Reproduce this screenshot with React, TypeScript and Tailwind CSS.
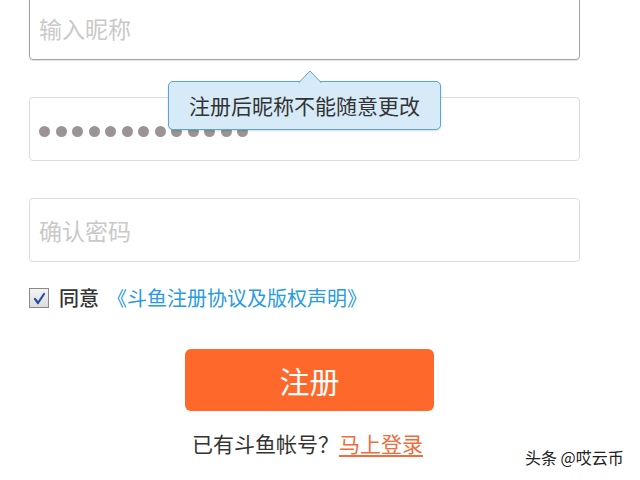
import React from "react";

const font = { fontFamily: '"Noto Sans CJK SC", "Noto Sans", sans-serif' };

export default function App() {
  const dots = Array.from({ length: 13 });
  return (
    <div className="relative w-[640px] h-[480px] bg-white overflow-hidden" style={font}>
      <div className="pl-[29px] w-[580px] flex flex-col">
        <div className="mt-[-4px] h-[64px] border border-[#a3a3a3] rounded-[4px] flex items-center pl-[9px] shadow-[0_1px_1px_rgba(0,0,0,0.12)]">
          <span className="text-[23px] text-[#c9c9c9] leading-none">输入昵称</span>
        </div>
        <div className="relative mt-[37px] h-[64px] border border-[#dcdcdc] rounded-[4px] flex items-center pl-[9px]">
          <div className="flex gap-[5.5px] mt-[4px]">
            {dots.map((_, i) => (
              <div key={i} className="w-[11px] h-[11px] rounded-full bg-[#9a9594]" />
            ))}
          </div>
          <div className="absolute left-[138px] top-[-17px] w-[273px] h-[49px] bg-[#d7eaf8] border border-[#58a6dc] rounded-[5px] flex items-center justify-center shadow-[0_1px_2px_rgba(0,0,0,0.15)]">
            <span className="text-[21px] text-[#333] leading-none">注册后昵称不能随意更改</span>
            <svg className="absolute left-[129px] top-[-12px]" width="24" height="13" viewBox="0 0 24 13">
              <polygon points="1,12.5 12,1 23,12.5" fill="#d7eaf8" stroke="#58a6dc" strokeWidth="1" />
              <rect x="1.5" y="12" width="21" height="2" fill="#d7eaf8" />
            </svg>
          </div>
        </div>
        <div className="mt-[37px] h-[64px] border border-[#dcdcdc] rounded-[4px] flex items-center pl-[9px]">
          <span className="text-[23px] text-[#c9c9c9] leading-none">确认密码</span>
        </div>
        <div className="mt-[26px] flex items-center">
          <div className="w-[20px] h-[20px] border border-[#8a8a8a] bg-gradient-to-b from-[#f4f4f4] to-[#dcdcdc] flex items-center justify-center">
            <svg width="13" height="13" viewBox="0 0 13 13">
              <path d="M2 7 L5 11 L11 2" fill="none" stroke="#2b4fa0" strokeWidth="2.2" strokeLinecap="round" strokeLinejoin="round" />
            </svg>
          </div>
          <span className="ml-[10px] text-[20px] text-[#333] font-medium leading-none">同意</span>
          <span className="ml-[8px] text-[20px] text-[#2a9be0] leading-none">《斗鱼注册协议及版权声明》</span>
        </div>
        <div className="mt-[41px] flex">
          <div className="ml-[156px] w-[249px] h-[62px] bg-[#ff682b] rounded-[6px] flex items-center justify-center">
            <span className="text-[30px] text-white leading-none">注册</span>
          </div>
        </div>
        <div className="mt-[22px] flex">
          <div className="ml-[163px] text-[21px] leading-none text-[#333]">
            已有斗鱼帐号？<span className="text-[#f06c3c] underline underline-offset-[3px]">马上登录</span>
          </div>
        </div>
      </div>
      <div className="absolute left-[525px] top-[449px] text-[16px] leading-none text-[#222]">头条 @哎云币</div>
    </div>
  );
}
